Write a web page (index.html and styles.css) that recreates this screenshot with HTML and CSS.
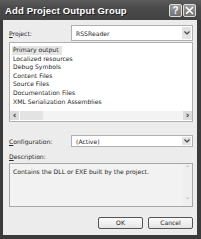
FILE: index.html
```html
<!DOCTYPE html>
<html>
<head>
<meta charset="utf-8">
<link rel="stylesheet" href="styles.css">
</head>
<body>
<div class="window">
  <div class="titlebar">
    <span class="title">Add Project Output Group</span>
    <div class="tbtns">
      <span class="tbtn">?</span>
      <span class="tbtn">
        <svg width="9" height="9" viewBox="0 0 9 9"><path d="M1 1L8 8M8 1L1 8" stroke="#fff" stroke-width="1.6"/></svg>
      </span>
    </div>
  </div>
  <div class="content">
    <div class="row project">
      <span class="label"><u>P</u>roject:</span>
      <div class="combo">
        <span class="combo-text">RSSReader</span>
        <span class="combo-btn"><svg width="6" height="4" viewBox="0 0 6 4"><path d="M0.5 0.5L3 3L5.5 0.5" stroke="#444" stroke-width="1.2" fill="none"/></svg></span>
      </div>
    </div>
    <div class="list">
      <div class="items">
        <div class="item sel">Primary output</div>
        <div class="item">Localized resources</div>
        <div class="item">Debug Symbols</div>
        <div class="item">Content Files</div>
        <div class="item">Source Files</div>
        <div class="item">Documentation Files</div>
        <div class="item">XML Serialization Assemblies</div>
      </div>
      <div class="hscroll">
        <span class="sbtn">&lsaquo;</span>
        <span class="thumb"></span>
        <span class="track"></span>
        <span class="sbtn">&rsaquo;</span>
      </div>
    </div>
    <div class="row config">
      <span class="label"><u>C</u>onfiguration:</span>
      <div class="combo">
        <span class="combo-text">(Active)</span>
        <span class="combo-btn"><svg width="6" height="4" viewBox="0 0 6 4"><path d="M0.5 0.5L3 3L5.5 0.5" stroke="#444" stroke-width="1.2" fill="none"/></svg></span>
      </div>
    </div>
    <div class="desc-label"><u>D</u>escription:</div>
    <div class="desc">
      <div class="desc-text">Contains the DLL or EXE built by the project.</div>
      <div class="vscroll">
        <span class="vbtn">&#710;</span>
        <span class="vbtn down">&#711;</span>
      </div>
    </div>
    <div class="buttons">
      <span class="btn">OK</span>
      <span class="btn">Cancel</span>
    </div>
  </div>
</div>
</body>
</html>
```
FILE: styles.css
```css
html, body {
  margin: 0;
  padding: 0;
  background: #3a3a3a;
}
.window {
  width: 201px;
  height: 239px;
  background: #3b3b3b;
  display: flex;
  flex-direction: column;
  font-family: "DejaVu Sans", "Liberation Sans", sans-serif;
  color: #262626;
  overflow: hidden;
}
.titlebar {
  height: 20px;
  display: flex;
  align-items: center;
  justify-content: space-between;
  padding: 0 5px 0 5px;
  background: linear-gradient(#5c5c5c, #4a4a4a 40%, #444);
  box-sizing: border-box;
}
.title {
  color: #fff;
  font-family: "Liberation Sans", sans-serif;
  font-weight: bold;
  font-size: 9.5px;
  letter-spacing: 0.15px;
  text-shadow: 1px 1px 0 #222;
}
.tbtns {
  display: flex;
  gap: 1px;
  margin-top: 1px;
}
.tbtn {
  width: 11px;
  height: 11px;
  border: 1px solid #ddd;
  border-radius: 2px;
  background: linear-gradient(#9a9a9a, #707070);
  color: #fff;
  font-family: "Liberation Sans", sans-serif;
  font-weight: bold;
  font-size: 10px;
  line-height: 11px;
  text-align: center;
  display: flex;
  align-items: center;
  justify-content: center;
}
.content {
  flex: 1;
  margin: 0 4px 4px 3px;
  background: #ececec;
  padding: 5px 4px 0 6px;
  display: flex;
  flex-direction: column;
  font-size: 6.1px;
}
.row {
  display: flex;
  align-items: center;
}
.project { height: 16px; }
.config { height: 12px; margin-top: 13px; }
.label {
  width: 62px;
  flex: none;
}
.combo {
  flex: 1;
  height: 100%;
  box-sizing: border-box;
  border: 1px solid #b0b0b0;
  background: #fff;
  display: flex;
  align-items: center;
  justify-content: space-between;
  padding: 0 1px 0 4px;
}
.combo-btn {
  width: 9px;
  height: calc(100% - 2px);
  background: #e2e2e2;
  display: flex;
  align-items: center;
  justify-content: center;
}
.list {
  margin-top: 1px;
  height: 80px;
  box-sizing: border-box;
  border: 1px solid #b0b0b0;
  background: #fff;
  display: flex;
  flex-direction: column;
}
.items {
  flex: 1;
  padding: 3px 0 0 2px;
}
.item {
  height: 8.6px;
  line-height: 8.6px;
  padding-left: 1px;
}
.item.sel {
  display: inline-block;
  background: #e4e4e4;
  padding-right: 3px;
}
.hscroll {
  height: 9px;
  display: flex;
  margin: 0 0 1px 0;
  background: #f0f0f0;
}
.sbtn {
  width: 9px;
  background: #dcdcdc;
  font-size: 9px;
  font-weight: bold;
  line-height: 8px;
  text-align: center;
  color: #333;
}
.thumb {
  width: 23px;
  background: #e3e3e3;
  border-left: 1px solid #fff;
}
.track {
  flex: 1;
  background: #f3f3f3;
}
.desc-label {
  margin-top: 5px;
  height: 10px;
  line-height: 10px;
}
.desc {
  margin-top: 1px;
  height: 44px;
  box-sizing: border-box;
  border: 1px solid #a8a8a8;
  background: #f2f2f2;
  display: flex;
}
.desc-text {
  flex: 1;
  padding: 4px 0 0 3px;
}
.vscroll {
  width: 9px;
  display: flex;
  flex-direction: column;
  justify-content: space-between;
  align-items: center;
  padding: 3px 0 1px;
  background: #efefef;
}
.vbtn {
  font-size: 9px;
  line-height: 6px;
  height: 6px;
  color: #aaa;
}
.buttons {
  margin-top: 10px;
  display: flex;
  justify-content: flex-end;
  gap: 5px;
}
.btn {
  width: 45px;
  height: 12px;
  box-sizing: border-box;
  border: 1px solid #555;
  border-radius: 2px;
  background: linear-gradient(#fafafa, #e4e4e4);
  text-align: center;
  line-height: 10px;
  font-size: 6.1px;
}
```
